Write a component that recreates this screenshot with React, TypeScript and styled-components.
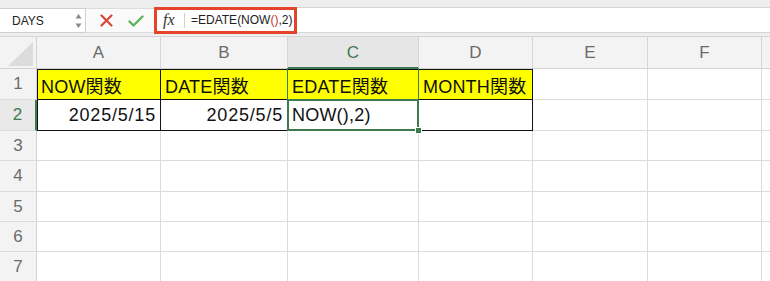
import React from "react";
import styled, { createGlobalStyle } from "styled-components";

const GlobalStyle = createGlobalStyle`
    html, body {
        margin: 0;
        padding: 0;
        background: #ffffff;
        overflow: hidden;
    }
    body {
        font-family: "Liberation Sans", "Noto Sans CJK JP", sans-serif;
    }
`;

const Page = styled.div`
    width: 770px;
    height: 281px;
    overflow: hidden;
    display: flex;
    flex-direction: column;
`;

const Toolbar = styled.div`
    display: flex;
    flex-shrink: 0;
    align-items: flex-start;
    height: 37px;
    box-sizing: border-box;
    padding-top: 8px;
    background: #eeeeee;
    border-bottom: 1px solid #d4d4d4;
`;

const NameBox = styled.div`
    display: flex;
    align-items: center;
    justify-content: space-between;
    width: 87px;
    height: 25px;
    margin-left: -1px;
    box-sizing: border-box;
    padding: 0 3px 0 12px;
    background: #ffffff;
    border: 1px solid #cfcfcf;
    font-size: 12px;
    color: #222;
`;

const Spinner = styled.svg`
    display: block;
`;

const ActionArea = styled.div`
    display: flex;
    align-items: center;
    width: 68px;
    height: 25px;
    box-sizing: border-box;
    padding-left: 14px;
    gap: 15px;
    background: #fafafa;
    border-top: 1px solid #dcdcdc;
    border-bottom: 1px solid #dcdcdc;
`;

const FormulaBar = styled.div`
    flex: 1;
    display: flex;
    align-items: center;
    height: 26px;
    margin-top: -1px;
    box-sizing: border-box;
    background: #ffffff;
    border-top: 1px solid #d6d6d6;
    border-bottom: 1px solid #d6d6d6;
`;

const Highlight = styled.div`
    display: flex;
    align-items: center;
    width: 143px;
    height: 27px;
    box-sizing: border-box;
    padding-left: 6px;
    border: 3px solid #e5432c;
    background: #ffffff;
`;

const Fx = styled.span`
    font-family: "Liberation Serif", "DejaVu Serif", serif;
    font-style: italic;
    font-size: 16px;
    color: #333;
    width: 14px;
`;

const Divider = styled.span`
    width: 1px;
    height: 15px;
    margin: 0 6px 0 7px;
    background: #d0d0d0;
`;

const Formula = styled.span`
    font-size: 12px;
    color: #222;
    white-space: nowrap;
`;

const Paren = styled.span`
    color: #c0302a;
`;

const Sheet = styled.div`
    flex-shrink: 0;
    display: grid;
    grid-template-columns: 37px 124px 127px 131px 114px 115px 114px 1fr;
    grid-template-rows: 32px 31px 31px 30px 31px 30px 30px 31px;
`;

const Corner = styled.div`
    position: relative;
    background: #f3f3f3;
    border-right: 1px solid #d2d2d2;
    border-bottom: 1px solid #d2d2d2;
    &::after {
        content: "";
        position: absolute;
        left: 8px;
        top: 5px;
        width: 25px;
        height: 24px;
        background: #dcdcdc;
        clip-path: polygon(100% 0, 100% 100%, 0 100%);
    }
`;

const ColHeader = styled.div<{ $active?: boolean }>`
    display: flex;
    align-items: center;
    justify-content: center;
    box-sizing: border-box;
    background: ${(p) => (p.$active ? "#e6e6e6" : "#f3f3f3")};
    border-right: 1px solid #d6d6d6;
    border-bottom: ${(p) => (p.$active ? "2px solid #3d7a4f" : "1px solid #d2d2d2")};
    font-size: 17px;
    color: ${(p) => (p.$active ? "#3d7a4f" : "#6b6b6b")};
    padding-top: ${(p) => (p.$active ? "1px" : "0")};
`;

const RowHeader = styled.div<{ $active?: boolean }>`
    display: flex;
    align-items: center;
    justify-content: center;
    box-sizing: border-box;
    background: ${(p) => (p.$active ? "#e9e9e9" : "#f3f3f3")};
    border-right: ${(p) => (p.$active ? "2px solid #3d7a4f" : "1px solid #d2d2d2")};
    border-bottom: 1px solid #dcdcdc;
    font-size: 17px;
    color: ${(p) => (p.$active ? "#3d7a4f" : "#6b6b6b")};
`;

const Cell = styled.div<{
    $fill?: boolean;
    $boxed?: boolean;
    $top?: boolean;
    $left?: boolean;
    $right?: boolean;
    $select?: "range" | "active";
}>`
    position: relative;
    display: flex;
    align-items: center;
    justify-content: ${(p) => (p.$right ? "flex-end" : "flex-start")};
    box-sizing: border-box;
    padding: 1px 4px 0 4px;
    white-space: nowrap;
    overflow: visible;
    background: ${(p) => (p.$fill ? "#ffff00" : "#ffffff")};
    border-right: 1px solid ${(p) => (p.$boxed ? "#111" : "#dcdcdc")};
    border-bottom: 1px solid ${(p) => (p.$boxed ? "#111" : "#dcdcdc")};
    box-shadow: ${(p) =>
        [p.$top ? "inset 0 1px 0 #111" : "", p.$left ? "inset 1px 0 0 #111" : ""]
            .filter(Boolean)
            .join(", ") || "none"};
    font-size: 18px;
    letter-spacing: ${(p) => (p.$right ? "0.8px" : "0.2px")};
    color: #111;

    ${(p) =>
        p.$select === "range" &&
        `
        &::after {
            content: "";
            position: absolute;
            top: -1px;
            left: -1px;
            right: -1px;
            bottom: -1px;
            border: 1px solid #3d7a4f;
            z-index: 2;
        }
    `}

    ${(p) =>
        p.$select === "active" &&
        `
        &::after {
            content: "";
            position: absolute;
            top: -1px;
            left: -1px;
            right: -1px;
            bottom: -1px;
            border: 2px solid #3d7a4f;
            z-index: 2;
        }
        &::before {
            content: "";
            position: absolute;
            right: -4px;
            bottom: -4px;
            width: 5px;
            height: 5px;
            background: #3d7a4f;
            border: 1px solid #ffffff;
            z-index: 3;
        }
    `}
`;

const columns = ["A", "B", "C", "D", "E", "F", ""];

type CellData = {
    text?: React.ReactNode;
    fill?: boolean;
    boxed?: boolean;
    right?: boolean;
    select?: "range" | "active";
};

const rows: CellData[][] = [
    [
        { text: "NOW関数", fill: true, boxed: true },
        { text: "DATE関数", fill: true, boxed: true },
        { text: "EDATE関数", fill: true, boxed: true, select: "range" },
        { text: "MONTH関数", fill: true, boxed: true },
    ],
    [
        { text: "2025/5/15", boxed: true, right: true },
        { text: "2025/5/5", boxed: true, right: true },
        { text: "NOW(),2)", boxed: true, select: "active" },
        { boxed: true },
    ],
    [],
    [],
    [],
    [],
    [],
];

const CrossIcon = () => (
    <svg width="13" height="13" viewBox="0 0 13 13">
        <path d="M1.5 1.5L11.5 11.5M11.5 1.5L1.5 11.5" stroke="#d5483c" strokeWidth="2.2" strokeLinecap="round" />
    </svg>
);

const CheckIcon = () => (
    <svg width="16" height="12" viewBox="0 0 16 12">
        <path d="M1.5 6.5L5.5 10.5L14.5 1.5" stroke="#5cb25c" strokeWidth="2.3" fill="none" strokeLinecap="round" strokeLinejoin="round" />
    </svg>
);

const App = () => {
    return (
        <Page>
            <GlobalStyle />
            <Toolbar>
                <NameBox>
                    <span>DAYS</span>
                    <Spinner width="7" height="16" viewBox="0 0 7 16">
                        <path d="M3.5 1L6.5 5.5H0.5Z" fill="#8a8a8a" />
                        <path d="M3.5 15L6.5 10.5H0.5Z" fill="#8a8a8a" />
                    </Spinner>
                </NameBox>
                <ActionArea>
                    <CrossIcon />
                    <CheckIcon />
                </ActionArea>
                <FormulaBar>
                    <Highlight>
                        <Fx>fx</Fx>
                        <Divider />
                        <Formula>
                            =EDATE(NOW<Paren>()</Paren>,2)
                        </Formula>
                    </Highlight>
                </FormulaBar>
            </Toolbar>
            <Sheet>
                <Corner />
                {columns.map((c) => (
                    <ColHeader key={`h-${c}`} $active={c === "C"}>
                        {c}
                    </ColHeader>
                ))}
                {rows.map((row, r) => (
                    <React.Fragment key={`r-${r}`}>
                        <RowHeader $active={r === 1}>{r + 1}</RowHeader>
                        {columns.map((_, c) => {
                            const d = row[c] || {};
                            return (
                                <Cell
                                    key={`c-${r}-${c}`}
                                    $fill={d.fill}
                                    $boxed={d.boxed}
                                    $top={r === 0 && c < 4}
                                    $left={c === 0 && r < 2}
                                    $right={d.right}
                                    $select={d.select}
                                >
                                    {d.text}
                                </Cell>
                            );
                        })}
                    </React.Fragment>
                ))}
            </Sheet>
        </Page>
    );
};

export default App;
